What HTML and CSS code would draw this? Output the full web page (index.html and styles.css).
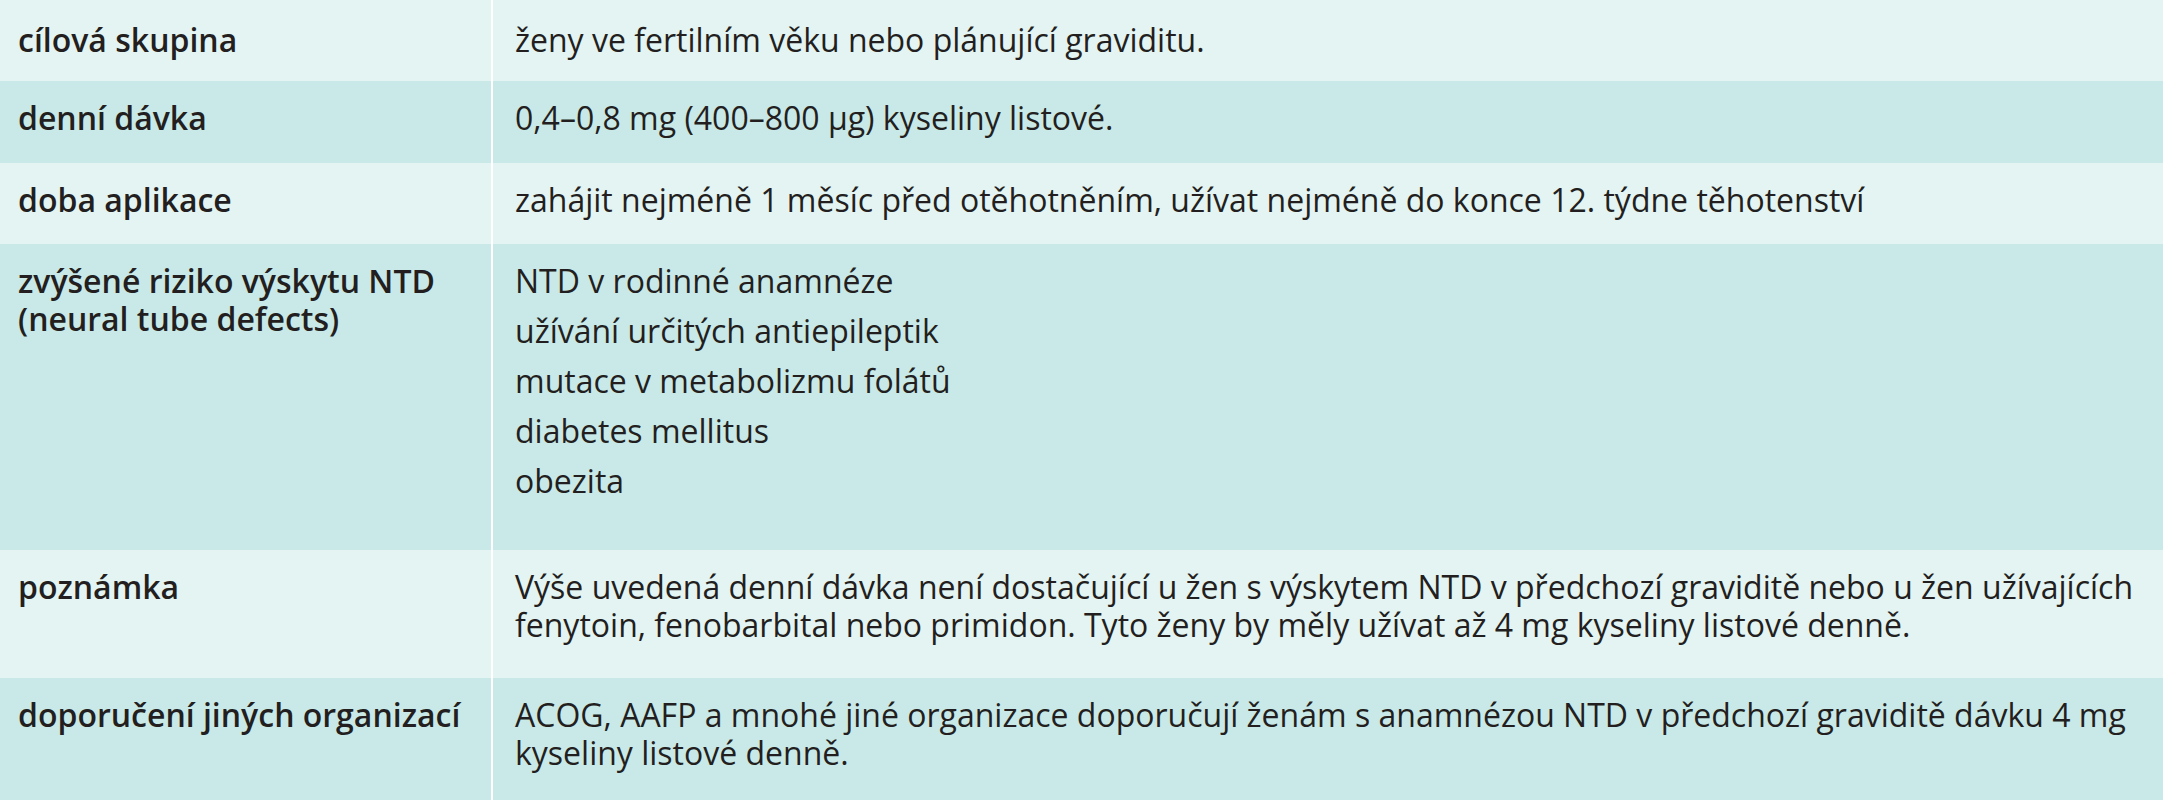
FILE: index.html
```html
<!DOCTYPE html>
<html lang="cs">
<head>
<meta charset="utf-8">
<title>Kyselina listová</title>
<link rel="stylesheet" href="styles.css">
</head>
<body>
<table class="info">
  <tbody>
    <tr class="row light r1">
      <th class="label">cílová skupina</th>
      <td class="value">ženy ve fertilním věku nebo plánující graviditu.</td>
    </tr>
    <tr class="row dark r2">
      <th class="label">denní dávka</th>
      <td class="value">0,4–0,8 mg (400–800 µg) kyseliny listové.</td>
    </tr>
    <tr class="row light r3">
      <th class="label">doba aplikace</th>
      <td class="value">zahájit nejméně 1 měsíc před otěhotněním, užívat nejméně do konce 12. týdne těhotenství</td>
    </tr>
    <tr class="row dark r4">
      <th class="label">zvýšené riziko výskytu NTD (neural tube defects)</th>
      <td class="value">
        <p class="item">NTD v rodinné anamnéze</p>
        <p class="item">užívání určitých antiepileptik</p>
        <p class="item">mutace v metabolizmu folátů</p>
        <p class="item">diabetes mellitus</p>
        <p class="item">obezita</p>
      </td>
    </tr>
    <tr class="row light r5">
      <th class="label">poznámka</th>
      <td class="value">Výše uvedená denní dávka není dostačující u žen s výskytem NTD v předchozí graviditě nebo u žen užívajících fenytoin, fenobarbital nebo primidon. Tyto ženy by měly užívat až 4 mg kyseliny listové denně.</td>
    </tr>
    <tr class="row dark r6">
      <th class="label">doporučení jiných organizací</th>
      <td class="value">ACOG, AAFP a mnohé jiné organizace doporučují ženám s anamnézou NTD v předchozí graviditě dávku 4 mg kyseliny listové denně.</td>
    </tr>
  </tbody>
</table>
</body>
</html>
```

FILE: styles.css
```css
html, body {
  margin: 0;
  padding: 0;
  background: #ffffff;
}

body {
  font-family: "Open Sans", "Noto Sans", "Liberation Sans", sans-serif;
  color: #231f20;
  font-size: 32px;
  line-height: 38px;
}

.info {
  width: 100%;
  border-collapse: collapse;
  border-spacing: 0;
  table-layout: fixed;
}

.row.light {
  background: #e4f4f3;
}

.row.dark {
  background: #c9e9e8;
}

.label,
.value {
  vertical-align: top;
  text-align: left;
  padding-top: 18px;
  padding-bottom: 0;
}

.label {
  width: 473px;
  padding-left: 18px;
  padding-right: 0;
  font-weight: 600;
  border-right: 2px solid #ffffff;
}

.value {
  padding-left: 22px;
  padding-right: 0;
  font-weight: 400;
}

.item {
  margin: 0 0 12px 0;
}

.r1 .label,
.r1 .value {
  padding-top: 21px;
}

.r1 { height: 81px; }
.r2 { height: 82px; }
.r3 { height: 81px; }
.r4 { height: 306px; }
.r5 { height: 128px; }
.r6 { height: 128px; }
```
